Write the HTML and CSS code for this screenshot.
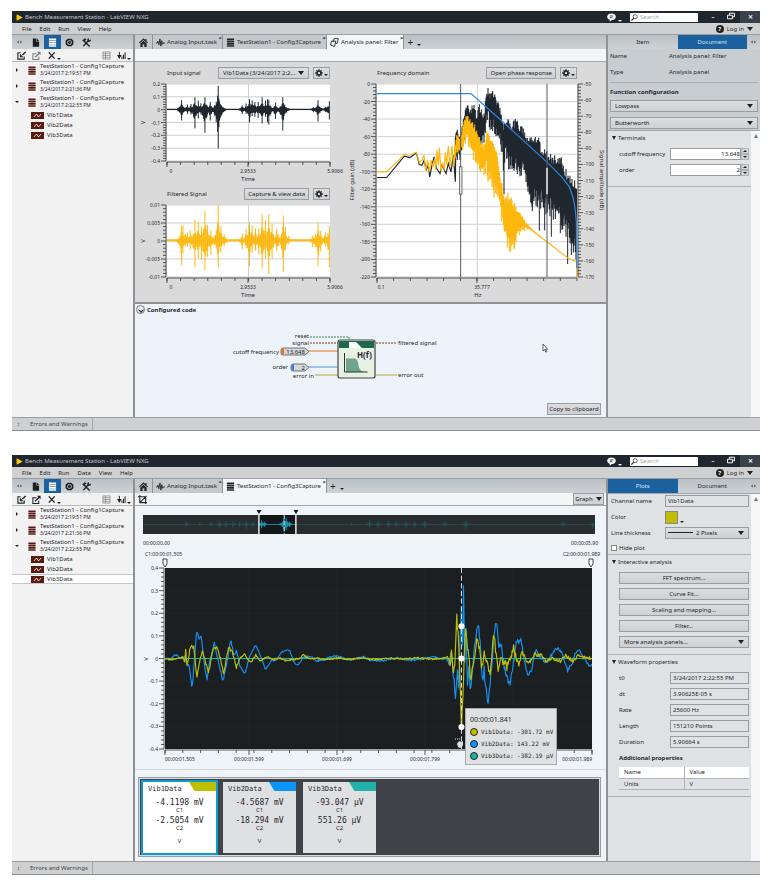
FILE: index.html
```html
<!DOCTYPE html>
<html lang="en">
<head>
    <meta charset="UTF-8">
    <meta name="viewport" content="width=device-width, initial-scale=1.0">
    <title>Bench Measurement Station - LabVIEW NXG</title>
    <link rel="stylesheet" href="styles.css">
</head>
<body>
    <svg class="symbols" aria-hidden="true">
        <symbol id="i-home" viewBox="0 0 10 10"><path d="M5 .4 0 5l.8.9L5 2.2l4.200 3.700L10 5 8.400 3.500V1H7v1.200z"/><path d="M5 3 1.500 6v4h2.600V7h1.800v3h2.600V6z"/></symbol>
        <symbol id="i-wave" viewBox="0 0 10 10"><path d="M0 5.500h1.500l.7-2 1 4L4.400 1l1 8 1-6 .9 4 .7-1.500h2" fill="none" stroke="currentColor"/></symbol>
        <symbol id="i-data" viewBox="0 0 10 10"><path d="M1 .5h8v2H1zM1 3.100h8v1.900H1zM1 5.600h8v1.900H1zM1 8.100h8v1.600H1z"/></symbol>
        <symbol id="i-doc" viewBox="0 0 10 10"><path d="M2 .5h4V4h3v5.700H2zM6.700.5 9 3.200H6.700z"/></symbol>
        <symbol id="i-target" viewBox="0 0 10 10"><path d="M3 .7h4L9.300 3v4L7 9.300H3L.7 7V3z"/><circle cx="5" cy="5" r="2.200" fill="none" stroke="#c5cbcf"/></symbol>
        <symbol id="i-tools" viewBox="0 0 10 10"><path d="M1.500 9 7.500 2.500M2 3l6.500 6.500" fill="none" stroke="currentColor" stroke-width="1.500"/><path d="M.3 2.700 3 .4l2 1-2.700 2.800zM6 .7 8 .4 7.500 2l1 .5 1.200-1V3.500L7.500 4.500 6 3z"/></symbol>
        <symbol id="i-import" viewBox="0 0 10 10"><path d="M4 2H1v7h7V6" fill="none" stroke="currentColor" stroke-width="1.200"/><path d="M9.500 1 6 4.500" stroke="currentColor" stroke-width="1.500"/><path d="M3.200 3v4h4z"/></symbol>
        <symbol id="i-export" viewBox="0 0 10 10"><path d="M5 3H1v6.500h6.500V6" fill="none" stroke="currentColor" stroke-width="1.200"/><path d="M3.500 7 8 2.500" stroke="currentColor" stroke-width="1.500"/><path d="M5.500.7h4v4z"/></symbol>
        <symbol id="i-delete" viewBox="0 0 10 10"><path d="M2 1.500 8.500 8.500M8.500 1.500 2 8.500" fill="none" stroke="currentColor" stroke-width="1.500"/></symbol>
        <symbol id="i-list" viewBox="0 0 10 10"><path d="M1 1h8v8H1zM1 3h8M1 5h8M1 7h8M4 1v8" fill="none" stroke="currentColor" stroke-width=".7"/></symbol>
        <symbol id="i-sort" viewBox="0 0 10 10"><path d="M2.600 1v7M5.500 9V6M7.200 9V4M9 9V1.500" fill="none" stroke="currentColor" stroke-width="1.100"/><path d="M0 4.500h5.200L2.600 8.500z"/></symbol>
        <symbol id="i-panel" viewBox="0 0 10 10"><path d="M3.500 4.500 4.500.7h4.800L8 6H6.500" fill="none" stroke="currentColor"/><path d="M1.500 3.500h5L5 9.300.7 8z" fill="none" stroke="currentColor"/></symbol>
        <symbol id="i-gear" viewBox="0 0 10 10"><path d="M5 .3v9.400M.3 5h9.400M1.700 1.700l6.600 6.600M8.300 1.700 1.700 8.300" stroke="currentColor" stroke-width="1.600"/><circle cx="5" cy="5" r="3.300"/><circle cx="5" cy="5" r="1.500" fill="#d8dade"/></symbol>
        <symbol id="i-crop" viewBox="0 0 10 10"><path d="M2 0v8.500h8M0 2h8.500v8M2 8.500 9.500 1" fill="none" stroke="currentColor" stroke-width="1.200"/></symbol>
        <symbol id="i-chat" viewBox="0 0 10 10"><path d="M5 .6c3 0 4.800 1.500 4.800 3.700S8 8 5 8L3 9.800V7.600C1.200 7 .2 6 .2 4.300.2 2.100 2 .6 5 .6z"/><path d="M3 3.300h4M3 5.200h3" stroke="#1f262d" stroke-width=".9"/></symbol>
        <symbol id="i-search" viewBox="0 0 10 10"><circle cx="6" cy="3.800" r="2.900" fill="none" stroke="currentColor" stroke-width="1.100"/><path d="M4 6 .7 9.300" stroke="currentColor" stroke-width="1.700"/></symbol>
        <symbol id="i-restore" viewBox="0 0 10 10"><path d="M3 3.500V1.500h6.300V6H7M.7 4h6v4.500h-6z" fill="none" stroke="currentColor" stroke-width="1.200"/></symbol>
        <symbol id="i-grip" viewBox="0 0 6 4"><path d="M0 2l2-1.700v3.400zM6 2 4 .3v3.400z"/></symbol>
        <symbol id="i-trace" viewBox="0 0 13 7"><path d="M0 0h13v7H0z" fill="#561c12"/><path d="M3 5 5.500 2 7.500 5 10 2" fill="none" stroke="#f0d8d0" stroke-width=".9"/></symbol>
        <symbol id="i-logo" viewBox="0 0 10 10"><path d="M1 .5 9.500 5 1 9.500z" fill="#ffd500"/><path d="M0 3.500h3M0 6.500h3" stroke="#d98a00"/></symbol>
    </svg>

    <main>
        <!-- Filter analysis panel -->
        <section class="window">
            <header class="titlebar">
                <svg class="icon"><use href="#i-logo"/></svg>
                <h1>Bench Measurement Station - LabVIEW NXG</h1>
                <button class="chat" aria-label="Feedback"><svg class="icon"><use href="#i-chat"/></svg><span class="dot"></span></button>
                <label class="search"><svg class="icon"><use href="#i-search"/></svg><input type="search" placeholder="Search" aria-label="Search"></label>
                <div class="controls">
                    <button aria-label="Minimize">–</button>
                    <button aria-label="Restore"><svg class="icon"><use href="#i-restore"/></svg></button>
                    <button class="close" aria-label="Close">✕</button>
                </div>
            </header>
            <nav class="menubar">
                <a href="#">File</a><a href="#">Edit</a><a href="#">Run</a><a href="#">View</a><a href="#">Help</a>
                <button class="login"><span class="help">?</span>Log in <span class="caret"></span></button>
            </nav>
            <div class="workspace">
                <aside class="project">
                    <div class="pane-tabs">
                        <span class="grip"><svg><use href="#i-grip"/></svg></span>
                        <button aria-label="Files"><svg class="icon"><use href="#i-doc"/></svg></button>
                        <button class="active" aria-label="Data"><svg class="icon"><use href="#i-data"/></svg></button>
                        <button aria-label="Hardware"><svg class="icon"><use href="#i-target"/></svg></button>
                        <button aria-label="Tools"><svg class="icon"><use href="#i-tools"/></svg></button>
                    </div>
                    <div class="pane-tools">
                        <button aria-label="Import"><svg class="icon"><use href="#i-import"/></svg></button>
                        <button class="off" aria-label="Export"><svg class="icon"><use href="#i-export"/></svg></button>
                        <button aria-label="Delete"><svg class="icon"><use href="#i-delete"/></svg><span class="dot"></span></button>
                        <button class="push off" aria-label="Columns"><svg class="icon"><use href="#i-list"/></svg></button>
                        <button aria-label="Sort"><svg class="icon"><use href="#i-sort"/></svg><span class="dot"></span></button>
                    </div>
                    <ul class="tree">
                        <li class="capture"><span class="twist"></span><svg class="icon"><use href="#i-data"/></svg><div>TestStation1 - Config1Capture<small>3/24/2017 2:19:51 PM</small></div></li>
                        <li class="capture"><span class="twist"></span><svg class="icon"><use href="#i-data"/></svg><div>TestStation1 - Config2Capture<small>3/24/2017 2:21:36 PM</small></div></li>
                        <li class="capture"><span class="twist open"></span><svg class="icon"><use href="#i-data"/></svg><div>TestStation1 - Config3Capture<small>3/24/2017 2:22:55 PM</small></div></li>
                        <li class="channel"><svg class="trace"><use href="#i-trace"/></svg>Vib1Data</li>
                        <li class="channel"><svg class="trace"><use href="#i-trace"/></svg>Vib2Data</li>
                        <li class="channel"><svg class="trace"><use href="#i-trace"/></svg>Vib3Data</li>
                    </ul>
                </aside>
                <div class="splitter"></div>
                <div class="document">
                    <div class="doc-tabs">
                        <button class="home" aria-label="Home"><svg class="icon"><use href="#i-home"/></svg></button>
                        <button><svg class="icon"><use href="#i-wave"/></svg>Analog Input.task<i>×</i></button>
                        <button><svg class="icon"><use href="#i-data"/></svg>TestStation1 - Config3Capture<i>×</i></button>
                        <button class="active"><svg class="icon"><use href="#i-panel"/></svg>Analysis panel: Filter<i>×</i></button>
                        <button class="add" aria-label="New tab">+<span class="dot"></span></button>
                    </div>
                    <div class="doc-tools"></div>
                    <div class="analysis">
                        <div class="charts">
                            <div class="chart-head">
                                <h2>Input signal</h2>
                                <span class="select signal"><select aria-label="Input signal"><option>Vib1Data (3/24/2017 2:2...</option></select></span>
                                <button class="btn gear" aria-label="Settings"><svg class="icon"><use href="#i-gear"/></svg><span class="dot"></span></button>
                            </div>
                            <svg class="chart" id="input-chart" viewBox="0 0 210 109"></svg>
                            <div class="chart-head">
                                <h2>Filtered Signal</h2>
                                <button class="btn">Capture &amp; view data</button>
                                <button class="btn gear" aria-label="Settings"><svg class="icon"><use href="#i-gear"/></svg><span class="dot"></span></button>
                            </div>
                            <svg class="chart" id="filtered-chart" viewBox="0 0 210 102"></svg>
                        </div>
                        <div class="charts frequency">
                            <div class="chart-head">
                                <h2>Frequency domain</h2>
                                <button class="btn">Open phase response</button>
                                <button class="btn gear" aria-label="Settings"><svg class="icon"><use href="#i-gear"/></svg><span class="dot"></span></button>
                            </div>
                            <svg class="chart" id="frequency-chart" viewBox="0 0 261 223"></svg>
                        </div>
                    </div>
                    <div class="code">
                        <h2><button class="collapse" aria-label="Collapse"></button>Configured code</h2>
                        <svg class="diagram" viewBox="0 0 471 84">
                            <g fill="none">
                                <path d="M175 22h39v4" stroke="#2f8a4c" stroke-dasharray="2 1"/>
                                <path d="M175 28h28M241 28h21" stroke="#7a3a20" stroke-dasharray="2 1"/>
                                <path d="M171 36h32" stroke="#e8751a"/>
                                <path d="M171 52h32" stroke="#4a90e2"/>
                                <path d="M180 60h23M241 60h21" stroke="#b3aa3a"/>
                            </g>
                            <g stroke="#555" stroke-width=".8">
                                <path d="M148 33h22l4 3.500-4 3.500h-22q-2 0-2-2v-3q0-2 2-2z" fill="#d4d6d8"/>
                                <path d="M158 49h12l4 3.500-4 3.500h-12q-2 0-2-2v-3q0-2 2-2z" fill="#d4d6d8"/>
                                <rect x="203" y="25" width="37" height="38" rx="2" fill="#e8f2e4" stroke="#444" stroke-width="1.200"/>
                            </g>
                            <path d="M148 33.500h1v6h-1q-1.500 0-1.500-2v-2q0-2 1.500-2z" fill="#e8751a"/>
                            <path d="M158 49.500h1v6h-1q-1.500 0-1.500-2v-2q0-2 1.500-2z" fill="#2f7fe8"/>
                            <path d="M204 26h35v7h-35z" fill="#1f6a4c"/>
                            <path d="M214 27h7l6 6h-13z" fill="#fff"/>
                            <path d="M211 43.500h9q3 1 3.500 7 1 5 5 6.500H211z" fill="#6fa58c"/>
                            <path d="M209.500 38v19h23" fill="none" stroke="#333"/>
                            <text x="222" y="43" class="func">H(f)</text>
                            <g text-anchor="end">
                                <text x="174" y="23">reset</text><text x="174" y="30">signal</text>
                                <text x="144" y="39">cutoff frequency</text><text x="153" y="54">order</text>
                                <text x="179" y="63">error in</text>
                                <text x="170" y="39">13.648</text><text x="170" y="55">2</text>
                            </g>
                            <text x="263" y="30">filtered signal</text><text x="263" y="62">error out</text>
                            <path d="M408 29v7l1.600-1.400 1.200 2.600 1-.5-1.200-2.500h2z" fill="#fff" stroke="#222" stroke-width=".7"/>
                        </svg>
                        <button class="btn copy">Copy to clipboard</button>
                    </div>
                </div>
                <div class="splitter"></div>
                <aside class="config">
                    <div class="side-tabs"><button>Item</button><button class="active">Document</button><span class="grip"><svg><use href="#i-grip"/></svg></span></div>
                    <div class="config-top">
                        <dl>
                            <dt>Name</dt><dd>Analysis panel: Filter</dd>
                            <dt>Type</dt><dd>Analysis panel</dd>
                        </dl>
                        <h3>Function configuration</h3>
                        <span class="select"><select aria-label="Response"><option>Lowpass</option></select></span>
                        <span class="select"><select aria-label="Design"><option>Butterworth</option></select></span>
                    </div>
                    <div class="scroller">
                        <div class="fields">
                            <section class="group">
                                <h3 class="fold">Terminals</h3>
                                <div class="field terminal"><label for="cutoff">cutoff frequency</label><input id="cutoff" value="13.648"><span class="spin"><button aria-label="Increase cutoff"></button><button aria-label="Decrease cutoff"></button></span></div>
                                <div class="field terminal"><label for="order">order</label><input id="order" value="2"><span class="spin"><button aria-label="Increase order"></button><button aria-label="Decrease order"></button></span></div>
                            </section>
                        </div>
                        <div class="scrollbar"></div>
                    </div>
                </aside>
            </div>
            <footer class="statusbar"><span class="updown">↕</span><span class="errors">Errors and Warnings</span></footer>
        </section>

        <!-- Captured waveform view -->
        <section class="window">
            <header class="titlebar">
                <svg class="icon"><use href="#i-logo"/></svg>
                <h1>Bench Measurement Station - LabVIEW NXG</h1>
                <button class="chat" aria-label="Feedback"><svg class="icon"><use href="#i-chat"/></svg><span class="dot"></span></button>
                <label class="search"><svg class="icon"><use href="#i-search"/></svg><input type="search" placeholder="Search" aria-label="Search"></label>
                <div class="controls">
                    <button aria-label="Minimize">–</button>
                    <button aria-label="Restore"><svg class="icon"><use href="#i-restore"/></svg></button>
                    <button class="close" aria-label="Close">✕</button>
                </div>
            </header>
            <nav class="menubar">
                <a href="#">File</a><a href="#">Edit</a><a href="#">Run</a><a href="#">Data</a><a href="#">View</a><a href="#">Help</a>
                <button class="login"><span class="help">?</span>Log in <span class="caret"></span></button>
            </nav>
            <div class="workspace">
                <aside class="project">
                    <div class="pane-tabs">
                        <span class="grip"><svg><use href="#i-grip"/></svg></span>
                        <button aria-label="Files"><svg class="icon"><use href="#i-doc"/></svg></button>
                        <button class="active" aria-label="Data"><svg class="icon"><use href="#i-data"/></svg></button>
                        <button aria-label="Hardware"><svg class="icon"><use href="#i-target"/></svg></button>
                        <button aria-label="Tools"><svg class="icon"><use href="#i-tools"/></svg></button>
                    </div>
                    <div class="pane-tools">
                        <button aria-label="Import"><svg class="icon"><use href="#i-import"/></svg></button>
                        <button aria-label="Export"><svg class="icon"><use href="#i-export"/></svg></button>
                        <button aria-label="Delete"><svg class="icon"><use href="#i-delete"/></svg><span class="dot"></span></button>
                        <button class="push off" aria-label="Columns"><svg class="icon"><use href="#i-list"/></svg></button>
                        <button aria-label="Sort"><svg class="icon"><use href="#i-sort"/></svg><span class="dot"></span></button>
                    </div>
                    <ul class="tree">
                        <li class="capture"><span class="twist"></span><svg class="icon"><use href="#i-data"/></svg><div>TestStation1 - Config1Capture<small>3/24/2017 2:19:51 PM</small></div></li>
                        <li class="capture"><span class="twist"></span><svg class="icon"><use href="#i-data"/></svg><div>TestStation1 - Config2Capture<small>3/24/2017 2:21:36 PM</small></div></li>
                        <li class="capture"><span class="twist open"></span><svg class="icon"><use href="#i-data"/></svg><div>TestStation1 - Config3Capture<small>3/24/2017 2:22:55 PM</small></div></li>
                        <li class="channel"><svg class="trace"><use href="#i-trace"/></svg>Vib1Data</li>
                        <li class="channel"><svg class="trace"><use href="#i-trace"/></svg>Vib2Data</li>
                        <li class="channel selected"><svg class="trace"><use href="#i-trace"/></svg>Vib3Data</li>
                    </ul>
                </aside>
                <div class="splitter"></div>
                <div class="document">
                    <div class="doc-tabs">
                        <button class="home" aria-label="Home"><svg class="icon"><use href="#i-home"/></svg></button>
                        <button><svg class="icon"><use href="#i-wave"/></svg>Analog Input.task<i>×</i></button>
                        <button class="active"><svg class="icon"><use href="#i-data"/></svg>TestStation1 - Config3Capture<i>×</i></button>
                        <button class="add" aria-label="New tab">+<span class="dot"></span></button>
                    </div>
                    <div class="doc-tools">
                        <button class="crop" aria-label="Crop"><svg class="icon"><use href="#i-crop"/></svg></button>
                        <button class="btn graph">Graph <span class="caret"></span></button>
                    </div>
                    <div class="capture-view">
                        <svg class="chart" id="overview" viewBox="0 0 471 30"></svg>
                        <div class="range"><span>00:00:00.00</span><span>00:00:05.90</span></div>
                        <div class="range cursors"><span>C1:00:00:01.505</span><span>C2:00:00:01.989</span></div>
                        <div class="graph-area">
                            <svg class="chart" id="capture-chart" viewBox="0 0 471 207"></svg>
                            <div class="tip">
                                <h4>00:00:01.841</h4>
                                <p><span class="swatch c1"></span>Vib1Data: -301.72 mV</p>
                                <p><span class="swatch c2"></span>Vib2Data: 143.22 mV</p>
                                <p><span class="swatch c3"></span>Vib3Data: -382.19 µV</p>
                            </div>
                        </div>
                        <div class="readouts">
                            <article class="card selected"><h4>Vib1Data</h4><b class="flag c1"></b><p>-4.1198 mV</p><small>C1</small><p>-2.5054 mV</p><small>C2</small><small class="unit">V</small></article>
                            <article class="card"><h4>Vib2Data</h4><b class="flag c2"></b><p>-4.5687 mV</p><small>C1</small><p>-18.294 mV</p><small>C2</small><small class="unit">V</small></article>
                            <article class="card"><h4>Vib3Data</h4><b class="flag c3"></b><p>-93.047 µV</p><small>C1</small><p>551.26 µV</p><small>C2</small><small class="unit">V</small></article>
                        </div>
                    </div>
                </div>
                <div class="splitter"></div>
                <aside class="config">
                    <div class="side-tabs"><button class="active">Plots</button><button>Document</button><span class="grip"><svg><use href="#i-grip"/></svg></span></div>
                    <div class="scroller">
                        <div class="fields">
                            <section class="group plot-group">
                                <div class="field"><label for="channel">Channel name</label><input id="channel" value="Vib1Data"></div>
                                <div class="field color"><span>Color</span><button aria-label="Plot color"></button><span class="dot"></span></div>
                                <div class="field"><label for="thickness">Line thickness</label><span class="select line"><select id="thickness"><option>2 Pixels</option></select></span></div>
                                <label class="check"><input type="checkbox"> Hide plot</label>
                            </section>
                            <section class="group">
                                <h3 class="fold">Interactive analysis</h3>
                                <div class="actions">
                                    <button class="btn">FFT spectrum...</button>
                                    <button class="btn">Curve Fit...</button>
                                    <button class="btn">Scaling and mapping...</button>
                                    <button class="btn">Filter...</button>
                                    <span class="select"><select aria-label="More analysis panels"><option>More analysis panels...</option></select></span>
                                </div>
                            </section>
                            <section class="group">
                                <h3 class="fold">Waveform properties</h3>
                                <div class="field prop"><label for="t0">t0</label><input id="t0" value="3/24/2017 2:22:55 PM"></div>
                                <div class="field prop"><label for="dt">dt</label><input id="dt" value="3.90625E-05 s"></div>
                                <div class="field prop"><label for="rate">Rate</label><input id="rate" value="25600 Hz"></div>
                                <div class="field prop"><label for="length">Length</label><input id="length" value="151210 Points"></div>
                                <div class="field prop"><label for="duration">Duration</label><input id="duration" value="5.90664 s"></div>
                                <h5>Additional properties</h5>
                                <table>
                                    <thead><tr><th>Name</th><th>Value</th></tr></thead>
                                    <tbody><tr><td>Units</td><td>V</td></tr></tbody>
                                </table>
                            </section>
                        </div>
                        <div class="scrollbar"></div>
                    </div>
                </aside>
            </div>
            <footer class="statusbar"><span class="updown">↕</span><span class="errors">Errors and Warnings</span></footer>
        </section>
    </main>
    <script src="charts.js"></script>
</body>
</html>
```
FILE: styles.css
```css
* {
    box-sizing: border-box;
}

body {
    margin: 0;
    background: #fff;
    color: #24282c;
    font-family: "Noto Sans", sans-serif;
    font-size: 6px;
    line-height: 8px;
}

h1, h2, h3, h4, h5, p, ul, dl, dd {
    margin: 0;
    padding: 0;
    font-size: 6px;
    font-weight: normal;
}

button, input, select {
    margin: 0;
    padding: 0;
    border: 0;
    border-radius: 0;
    background: none;
    color: inherit;
    font: inherit;
}

main {
    display: flex;
    flex-direction: column;
    gap: 24px;
    padding: 11px 10px 16px 12px;
}

.symbols {
    display: none;
}

.icon {
    flex: none;
    width: 9px;
    height: 9px;
    fill: currentColor;
}

.dot {
    align-self: flex-end;
    width: 0;
    margin-left: 2px;
    border: 2px solid transparent;
    border-top-color: #222;
    border-bottom: 0;
}

.caret {
    display: inline-block;
    width: 0;
    border: 3px solid transparent;
    border-top: 4px solid #222;
    border-bottom: 0;
}

.grip {
    display: flex;
    align-items: center;
    justify-content: center;
}

.grip svg {
    width: 5px;
    height: 4px;
    fill: #444;
}

/* Window frame */
.window {
    background: #cfd0d1;
    border-bottom: 1px solid #8b8e91;
}

.titlebar {
    display: flex;
    align-items: center;
    height: 12px;
    padding-left: 4px;
    background: #1f262d;
    color: #c4c8cc;
}

.titlebar > .icon {
    width: 7px;
    height: 7px;
}

.titlebar h1 {
    flex: 1;
    margin-left: 2px;
}

.chat {
    display: flex;
    margin-right: 8px;
    color: #fff;
}

.chat .dot {
    border-top-color: #fff;
}

.search {
    display: flex;
    align-items: center;
    width: 68px;
    height: 9px;
    padding-left: 1px;
    background: #fff;
    color: #333;
}

.search .icon {
    width: 7px;
    height: 7px;
}

.search input {
    width: 50px;
    margin-left: 2px;
    outline: none;
}

.search input::placeholder {
    color: #aaa;
}

.controls {
    display: flex;
    align-self: stretch;
    margin-left: 6px;
}

.controls button {
    width: 18px;
    color: #fff;
    font-weight: bold;
}

.controls .icon {
    width: 8px;
    height: 8px;
}

.controls .close {
    width: 20px;
    background: #39424a;
}

.menubar {
    display: flex;
    align-items: center;
    gap: 8px;
    height: 11px;
    padding: 0 7px 0 10px;
}

.menubar a {
    color: #222;
    text-decoration: none;
}

.login {
    display: flex;
    align-items: center;
    gap: 3px;
    margin-left: auto;
}

.help {
    width: 8px;
    height: 8px;
    border-radius: 4px;
    background: #222;
    color: #fff;
    font-weight: bold;
}

.workspace {
    display: grid;
    grid-template-columns: 121px 2px minmax(0, 1fr) 2px 152px;
    min-height: 383px;
    border-top: 1px solid #9a9ea2;
}

.splitter {
    background: #8f9397;
}

.statusbar {
    display: flex;
    align-items: center;
    height: 13px;
    border-top: 1px solid #9a9ea2;
    color: #444;
    white-space: nowrap;
}

.updown {
    width: 18px;
    padding-left: 5px;
}

.errors {
    padding-right: 4px;
    border-right: 1px solid #a5a7a9;
    line-height: 12px;
}

/* Left pane */
.project {
    background: #f2f2f2;
}

.pane-tabs {
    display: flex;
    height: 14px;
    background: linear-gradient(#b9c0c5, #cdd2d5);
}

.pane-tabs .grip {
    width: 15px;
}

.pane-tabs button {
    display: flex;
    align-items: center;
    justify-content: center;
    width: 17px;
    color: #1c1f22;
}

.pane-tabs .active {
    background: #1c619f;
    color: #fff;
}

.pane-tools {
    display: flex;
    align-items: center;
    gap: 6px;
    height: 13px;
    padding: 0 2px 0 5px;
    border-bottom: 1px solid #b8bbbd;
    color: #222;
}

.pane-tools button {
    display: flex;
}

.pane-tools .dot {
    margin-left: 1px;
}

.pane-tools .push {
    margin-left: auto;
}

.off {
    color: #77797b;
}

.tree {
    list-style: none;
}

.capture {
    display: flex;
    align-items: center;
    height: 16px;
    line-height: 7px;
    white-space: nowrap;
}

.capture .icon {
    width: 10px;
    margin-right: 3px;
    color: #561c12;
}

.capture small {
    display: block;
    font-size: 5px;
}

.twist {
    flex: none;
    width: 15px;
}

.twist::before {
    content: "";
    display: block;
    width: 0;
    margin-left: 4px;
    border: 2px solid transparent;
    border-left-color: #222;
    border-right: 0;
}

.twist.open::before {
    margin-left: 3px;
    border: 2px solid transparent;
    border-top-color: #222;
    border-bottom: 0;
}

.channel {
    display: flex;
    align-items: center;
    gap: 3px;
    height: 10px;
    padding-left: 19px;
}

.channel.selected {
    border: solid #c4c6c8;
    border-width: 1px 0;
    background: #fff;
}

.trace {
    width: 13px;
    height: 7px;
}

/* Document area */
.document {
    display: flex;
    flex-direction: column;
}

.doc-tabs {
    display: flex;
    height: 14px;
    background: linear-gradient(#b9c0c5, #cdd2d5);
}

.doc-tabs button {
    position: relative;
    display: flex;
    align-items: center;
    gap: 2px;
    padding: 0 5px 0 3px;
    border-right: 1px solid #909498;
    background: #c3c9cd;
    white-space: nowrap;
}

.doc-tabs .home {
    padding: 0 4px;
}

.doc-tabs .active {
    background: #f4f5f6;
}

.doc-tabs .add {
    border: 0;
    background: none;
    font-size: 10px;
}

.add .dot {
    margin-bottom: 3px;
}

.doc-tabs i {
    position: absolute;
    top: 0;
    right: 0;
    font-style: normal;
    font-weight: bold;
    line-height: 6px;
}

.doc-tools {
    display: flex;
    align-items: center;
    justify-content: space-between;
    height: 13px;
    padding: 0 2px 0 3px;
    border-bottom: 1px solid #a4a7aa;
    background: #f4f5f6;
}

.btn {
    display: flex;
    align-items: center;
    justify-content: center;
    height: 12px;
    border: 1px solid #9a9da1;
    background: linear-gradient(#dcdee1, #cdd0d4);
    color: #222;
}

.select {
    position: relative;
    display: block;
    height: 12px;
    border: 1px solid #9a9da1;
    background: linear-gradient(#dcdee1, #cdd0d4);
    color: #222;
}

.select::after {
    content: "";
    position: absolute;
    top: 3px;
    right: 4px;
    border: 3px solid transparent;
    border-top: 4px solid #222;
    border-bottom: 0;
    pointer-events: none;
}

.select select {
    display: block;
    width: 100%;
    height: 10px;
    padding-left: 4px;
    appearance: none;
    line-height: 10px;
}

.graph {
    width: 31px;
    gap: 3px;
}

.crop {
    display: flex;
}

.analysis {
    display: grid;
    grid-template-columns: 210fr 261fr;
    padding-top: 5px;
    background: #dadada;
}

.chart-head {
    display: flex;
    align-items: center;
    gap: 4px;
    height: 12px;
    padding: 0 15px 0 32px;
}

.frequency .chart-head {
    padding-right: 29px;
}

.chart-head h2 {
    flex: 1;
    white-space: nowrap;
}

.chart-head .btn {
    padding: 0 3px;
}

.chart-head .gear {
    width: 17px;
    padding: 0;
}

.gear .icon {
    width: 8px;
    height: 8px;
}

.gear .dot {
    margin: 0 0 2px 1px;
}

.signal {
    width: 91px;
}

.chart {
    display: block;
    width: 100%;
    fill: #24282c;
}

.chart text, .diagram text {
    font-size: 6px;
}

.chart .scale {
    font-size: 5px;
}

.code {
    display: flex;
    flex: 1;
    flex-direction: column;
    border-top: 2px solid #8f9397;
    background: #edf3f8;
}

.code h2 {
    display: flex;
    align-items: center;
    gap: 2px;
    height: 11px;
    padding-left: 1px;
    font-weight: bold;
}

.collapse {
    display: flex;
    align-items: center;
    justify-content: center;
    width: 9px;
    height: 9px;
    border: 1px solid #777;
    border-radius: 5px;
}

.collapse::before {
    content: "";
    width: 3px;
    height: 3px;
    border: solid #222;
    border-width: 0 1px 1px 0;
    transform: rotate(45deg);
}

.diagram {
    display: block;
    width: 100%;
    fill: #24282c;
}

.diagram .func {
    font-size: 8px;
    font-weight: bold;
}

.copy {
    align-self: flex-end;
    width: 54px;
    margin: auto 5px 2px 0;
    white-space: nowrap;
}

/* Captured waveform */
.capture-view {
    display: flex;
    flex: 1;
    flex-direction: column;
    background: #eff4f8;
}

.range {
    display: flex;
    justify-content: space-between;
    padding: 3px 8px 0;
    font-size: 5px;
}

.range.cursors {
    padding: 3px 6px 0 10px;
}

.graph-area {
    position: relative;
    padding-bottom: 4px;
    border-bottom: 1px solid #d4d8dc;
    margin: 0 0 7px;
}

.tip {
    position: absolute;
    right: 49px;
    bottom: 4px;
    width: 92px;
    height: 57px;
    padding: 6px 4px 2px;
    border: 1px solid #a8aaad;
    background: #dfe0e2;
}

.tip h4 {
    margin-bottom: 2px;
    font-size: 7px;
    line-height: 9px;
}

.tip p {
    display: flex;
    align-items: center;
    gap: 3px;
    height: 12px;
    font-family: "DejaVu Sans Mono", monospace;
    white-space: nowrap;
}

.swatch {
    flex: none;
    width: 8px;
    height: 8px;
    border: 1px solid #222;
    border-radius: 4px;
}

.c1 {
    background: #bfbf00;
}

.c2 {
    background: #0a94ff;
}

.c3 {
    background: #20b2aa;
}

.readouts {
    display: flex;
    gap: 7px;
    height: 80px;
    margin: 0 5px 4px 3px;
    padding: 2px 4px;
    border: 1px solid #9a9da1;
    background: #404448;
    box-shadow: inset 0 0 0 1px #d8dadc;
}

.card {
    position: relative;
    width: 73px;
    height: 71px;
    margin-top: 2px;
    padding-top: 3px;
    background: #dfe0e2;
    text-align: center;
}

.card.selected {
    background: #fff;
    outline: 2px solid #0a9ad8;
}

.card h4 {
    padding-left: 5px;
    font-family: "DejaVu Sans Mono", monospace;
    font-size: 7px;
    text-align: left;
}

.card p {
    margin-top: 5px;
    font-family: "DejaVu Sans Mono", monospace;
    font-size: 8px;
    line-height: 9px;
}

.card small {
    display: block;
    font-size: 6px;
    line-height: 6px;
}

.card small + p {
    margin-top: 3px;
}

.card .unit {
    margin-top: 7px;
}

.flag {
    position: absolute;
    top: 0;
    right: 0;
    width: 27px;
    height: 9px;
    clip-path: polygon(0 0, 100% 0, 100% 100%, 20% 100%);
}

/* Right pane */
.config {
    display: flex;
    flex-direction: column;
    background: #c8cdd1;
}

.side-tabs {
    display: flex;
    height: 14px;
    background: linear-gradient(#b9c0c5, #cdd2d5);
}

.side-tabs button {
    flex: 1;
}

.side-tabs .active {
    background: #1c619f;
    color: #d5e4f0;
}

.side-tabs .grip {
    width: 13px;
}

.config-top {
    padding: 3px 2px 1px;
}

.config dl {
    display: grid;
    grid-template-columns: 59px 1fr;
    row-gap: 8px;
    padding-bottom: 6px;
    border-bottom: 1px solid #a8adb1;
}

.config-top h3 {
    margin: 5px 0 4px;
    font-weight: bold;
}

.config-top .select + .select {
    margin-top: 5px;
}

.scroller {
    display: flex;
    flex: 1;
    border-top: 1px solid #a4a7aa;
    background: #dfe1e4;
}

.fields {
    flex: 1;
    min-width: 0;
}

.scrollbar {
    flex: none;
    width: 9px;
    padding-top: 3px;
    background: #f5f6f7;
}

.scrollbar::before {
    content: "";
    display: block;
    width: 0;
    margin: 0 auto;
    border: 2px solid transparent;
    border-bottom: 4px solid #777;
    border-top: 0;
}

.group {
    padding: 3px 2px 6px 11px;
    border-bottom: 1px solid #b0b3b6;
}

.plot-group {
    padding: 1px 2px 1px 3px;
}

.fold {
    display: flex;
    align-items: center;
    gap: 2px;
    margin: 0 0 6px -7px;
}

.fold::before {
    content: "";
    border: 2px solid transparent;
    border-top: 4px solid #222;
    border-bottom: 0;
}

.field {
    display: flex;
    align-items: center;
    height: 12px;
    margin-bottom: 4px;
}

.field > :first-child {
    flex: none;
    width: 54px;
    white-space: nowrap;
}

.field input {
    flex: 1;
    min-width: 0;
    height: 12px;
    padding-left: 2px;
    border: 1px solid #9a9da1;
}

.field .select {
    flex: 1;
}

.field.terminal > label, .field.prop > label {
    width: 51px;
}

.terminal input {
    background: #fff;
    text-align: right;
}

.spin {
    display: flex;
    flex: none;
    flex-direction: column;
    width: 8px;
    height: 12px;
}

.spin button {
    display: flex;
    flex: 1;
    align-items: center;
    justify-content: center;
    border: 1px solid #b0b3b6;
    background: #d4d6d9;
}

.spin button::before {
    content: "";
    border: 2px solid transparent;
    border-bottom-color: #222;
    border-top: 0;
}

.spin button + button::before {
    border-top: 2px solid #222;
    border-bottom: 0;
}

.color button {
    width: 13px;
    height: 13px;
    border: 1px solid #888;
    background: #bfbf00;
}

.line select {
    padding-left: 30px;
}

.line::before {
    content: "";
    position: absolute;
    top: 4px;
    left: 2px;
    width: 25px;
    height: 1px;
    background: #222;
}

.check {
    display: flex;
    align-items: center;
    gap: 2px;
    height: 10px;
}

.check input {
    width: 6px;
    height: 6px;
    border: 1px solid #888;
    background: #fff;
    appearance: none;
}

.actions {
    display: flex;
    flex-direction: column;
    gap: 4px;
}

.config h5 {
    margin-top: 6px;
    font-weight: bold;
}

.config table {
    width: 100%;
    margin-top: 5px;
    border-collapse: collapse;
}

.config th, .config td {
    width: 50%;
    height: 11px;
    padding: 0 5px;
    border-bottom: 1px solid #b0b3b6;
    font-weight: normal;
    text-align: left;
}

.config th {
    background: #fff;
}

.config th + th, .config td + td {
    border-left: 1px solid #b0b3b6;
}
```
FILE: charts.js
```js
const NS = 'http://www.w3.org/2000/svg';

function add(parent, name, attrs, text) {
    const node = document.createElementNS(NS, name);
    for (const key in attrs) node.setAttribute(key, attrs[key]);
    if (text !== undefined) node.textContent = text;
    parent.appendChild(node);
    return node;
}

// repeatable noise so the traces look the same on every load
let seed = 7;
function rand() {
    seed = (seed * 16807) % 2147483647;
    return seed / 2147483647;
}

function lerp(points, x) {
    for (let i = 1; i < points.length; i++) {
        const [x0, y0] = points[i - 1];
        const [x1, y1] = points[i];
        if (x <= x1) return y0 + (y1 - y0) * (x - x0) / (x1 - x0);
    }
    return points[points.length - 1][1];
}

function pairs(text) {
    return text.trim().split(/\s+/).map(p => p.split(',').map(Number));
}

function plotArea(svg, x, y, w, h, viewBox, fill) {
    add(svg, 'rect', { x, y, width: w, height: h, fill });
    return add(svg, 'svg', { x, y, width: w, height: h, viewBox, preserveAspectRatio: 'none' });
}

function yAxis(svg, x, top, bottom, labels, side = -1) {
    const step = (bottom - top) / (labels.length - 1);
    let d = `M${x} ${top}V${bottom}`;
    labels.forEach((label, i) => {
        const y = top + step * i;
        d += `M${x} ${y}h${side * 5}`;
        for (let k = 1; k < 5 && i < labels.length - 1; k++) d += `M${x} ${y + step * k / 5}h${side * 3}`;
        add(svg, 'text', { class: 'scale', x: x + side * 6, y: y + 2, 'text-anchor': side < 0 ? 'end' : 'start' }, label);
    });
    add(svg, 'path', { d, stroke: '#333', 'stroke-width': 0.8, fill: 'none' });
}

function xAxis(svg, y, x0, x1, count, labels) {
    let d = `M${x0} ${y}H${x1}`;
    for (let i = 0; i <= count; i++) d += `M${x0 + (x1 - x0) * i / count} ${y}v3`;
    labels.forEach(([x, label, anchor = 'middle', tick = x]) => {
        d += `M${tick} ${y}v5`;
        add(svg, 'text', { class: 'scale', x, y: y + 11, 'text-anchor': anchor }, label);
    });
    add(svg, 'path', { d, stroke: '#333', 'stroke-width': 0.8, fill: 'none' });
}

function turned(svg, x, y, angle, text) {
    add(svg, 'text', { x, y, transform: `rotate(${angle} ${x} ${y})`, 'text-anchor': 'middle' }, text);
}

// peaks are [x, height above, depth below] round the zero line
function burst(plot, x0, x1, mid, peaks, color, body, spread, base = 2) {
    let d = '';
    for (let x = x0; x < x1; x += 2) {
        let up = base, down = base;
        peaks.forEach(([px, u, l]) => {
            const dist = Math.abs(x - px);
            const k = dist < 1.1 ? 1 : body * Math.exp(-dist / spread) * (0.6 + rand() * 0.5);
            up = Math.max(up, u * k);
            down = Math.max(down, l * k);
        });
        d += `M${x} ${mid - up}V${mid + down}`;
    }
    add(plot, 'path', { d, stroke: color, 'stroke-width': 3, fill: 'none' });
}

function band(plot, upper, lower, color, jitter) {
    const start = upper[0][0];
    const end = upper[upper.length - 1][0];
    let d = '';
    for (let x = start; x <= end; x += 2) {
        const top = lerp(upper, x);
        const bottom = lerp(lower, x);
        const j = Math.min(jitter, (bottom - top) * 0.3);
        d += `M${x} ${top + rand() * j * 0.7}V${bottom - rand() * j * 1.4}`;
    }
    add(plot, 'path', { d, stroke: color, 'stroke-width': 3.2, fill: 'none' });
}

function trace(plot, points, color, noise) {
    let d = '';
    const end = points[points.length - 1][0];
    for (let x = points[0][0]; x <= end; x += 2) {
        d += `${d ? 'L' : 'M'}${x} ${(lerp(points, x) + (rand() - 0.5) * noise(x)).toFixed(1)}`;
    }
    add(plot, 'path', { d, stroke: color, 'stroke-width': 3.5, fill: 'none', 'stroke-linejoin': 'round' });
}

function timeChart(id, y0, y1, viewBox, labels, mid, peaks, color, body, spread, base) {
    const svg = document.getElementById(id);
    const plot = plotArea(svg, 32, y0, 163, y1 - y0, viewBox, '#fff');
    const [, vy, , vh] = viewBox.split(' ').map(Number);
    let grid = `M355 ${vy}v${vh}`;
    for (let i = 0; i < labels.length; i++) grid += `M110 ${vy + vh * i / (labels.length - 1)}h490`;
    add(plot, 'path', { d: grid, stroke: '#d0d0d0', 'stroke-width': 3 });
    burst(plot, 110, 600, mid, peaks, color, body, spread, base);
    yAxis(svg, 31, y0, y1, labels);
    xAxis(svg, y1 + 1, 32, 195, 12, [[36, '0', 'middle', 32], [113, '2.9533'], [200, '5.9066', 'middle', 195]]);
    add(svg, 'text', { x: 113, y: y1 + 20, 'text-anchor': 'middle' }, 'Time');
    turned(svg, 10, (y0 + y1) / 2, -90, 'V');
}

timeChart('input-chart', 5, 82, '110 167 490 228', ['0.2', '0.1', '0', '-0.1', '-0.2', '-0.3', '-0.4'], 242,
    [[154, 27, 33], [172, 14, 14], [182, 16, 15], [194, 36, 57], [204, 26, 27], [212, 18, 15], [224, 36, 69],
     [240, 22, 33], [264, 70, 116], [268, 24, 24], [280, 5, 8], [336, 12, 14], [348, 17, 14], [358, 30, 39],
     [366, 26, 20], [374, 22, 22], [384, 22, 26], [396, 36, 42], [406, 26, 22], [412, 30, 38], [416, 28, 45],
     [436, 20, 28], [458, 36, 63], [464, 14, 14], [476, 4, 4], [550, 7, 9], [564, 27, 36], [570, 8, 10],
     [586, 8, 9], [598, 24, 30]], '#1f262d', 0.72, 7, 2);

timeChart('filtered-chart', 5, 77, '110 80 490 216', ['0.01', '0.005', '0', '-0.005', '-0.01'], 186,
    [[154, 44, 75], [158, 44, 40], [166, 20, 18], [172, 24, 20], [180, 30, 27], [194, 62, 80], [204, 56, 54],
     [214, 42, 60], [224, 88, 90], [232, 46, 50], [242, 30, 44], [252, 12, 16], [264, 106, 82], [272, 42, 36],
     [282, 18, 18], [290, 5, 8], [336, 20, 27], [348, 34, 24], [358, 54, 78], [366, 46, 38], [376, 36, 30],
     [386, 36, 42], [396, 78, 84], [406, 60, 54], [416, 78, 100], [426, 50, 56], [440, 34, 32], [446, 16, 18],
     [460, 75, 94], [466, 40, 28], [476, 14, 12], [548, 15, 20], [556, 18, 20], [564, 54, 78], [572, 28, 34],
     [586, 24, 18], [594, 22, 18], [598, 42, 80]], '#fdb70d', 0.72, 6, 3);

function frequencyChart() {
    const svg = document.getElementById('frequency-chart');
    const plot = plotArea(svg, 32, 5, 200, 193, '111 76 600 580', '#fff');
    let grid = 'M412 76v580';
    for (let y = 76; y < 656; y += 52.7) grid += `M111 ${y}h600`;
    add(plot, 'path', { d: grid, stroke: '#d0d0d0', 'stroke-width': 3 });

    const ink = '#1f262d';
    const line = (points, stroke) => add(plot, 'polyline', { points, stroke, 'stroke-width': 3.5, fill: 'none' });

    line('110,357 140,357 193,293 210,297 229,283 238,318 246,320 252,306 259,333 265,320 269,355 275,325 282,295 290,330 300,345 306,320 318,345 325,315 333,340 340,290 346,370 348,230', ink);
    band(plot,
        pairs('346,225 352,210 360,240 370,180 382,130 388,160 402,126 410,175 416,130 425,155 433,165 437,110 444,80 450,96 458,96 466,110 476,120 484,165 492,192 506,168 515,185 525,180 545,195 560,232 580,238 590,222 605,258 625,280 645,290 665,296 680,335 700,358 711,376'),
        pairs('346,300 360,320 370,260 380,220 400,245 420,260 433,260 440,200 460,230 480,260 488,300 492,420 496,300 510,350 530,360 550,360 563,410 575,450 600,455 620,470 640,490 665,515 680,540 700,585 711,610'),
        ink, 46);
    add(plot, 'path', { d: 'M577 400V458M598 400V517M614 400V516M634 400V535M661 450V524M683 500V617M694 500V590', stroke: ink, 'stroke-width': 3 });

    const gold = '#fdb70d';
    line('110,340 140,340 193,288 210,290 229,281 238,312 246,305 252,290 257,336 263,305 268,340', gold);
    line('268,340 273,305 279,325 284,300 287,335 291,275 295,320 298,268 303,338 308,312 313,335 316,282 320,318 325,262 330,325 336,262 341,322 346,260', gold);
    band(plot,
        pairs('344,255 352,220 362,238 372,182 382,162 390,180 402,188 410,215 420,236 432,255 440,213 450,230 462,250 470,276 480,336 495,418 505,400 520,426 540,462 565,500 600,533'),
        pairs('344,320 352,290 370,280 382,270 400,310 420,355 440,360 460,415 475,445 490,520 503,590 515,592 530,560 545,525 565,512 600,537'),
        gold, 40);
    line('595,530 640,565 665,585 685,600 700,607 710,608 710,656', gold);
    line('110,105 393,105 500,200 620,310 665,355 688,385 700,420 706,455 709,490 710,630', '#2f86e6');
    add(plot, 'path', { d: 'M362 76v580M621 76v580', stroke: '#55595d', 'stroke-width': 3 });
    add(plot, 'path', { d: 'M621 328v79', stroke: '#ddd', 'stroke-width': 5 });
    add(plot, 'rect', { x: 358, y: 325, width: 8, height: 82, fill: '#e8e8e8', stroke: '#333', 'stroke-width': 2 });

    const gain = [], amp = [];
    for (let v = 0; v >= -220; v -= 20) gain.push(v);
    for (let v = -50; v >= -170; v -= 10) amp.push(v);
    yAxis(svg, 31, 5, 198, gain);
    yAxis(svg, 233, 5, 198, amp, 1);
    xAxis(svg, 199, 32, 232, 12, [[36, '0.1', 'middle', 32], [137, '35.777', 'middle', 132]]);
    add(svg, 'text', { x: 133, y: 218, 'text-anchor': 'middle' }, 'Hz');
    turned(svg, 9, 101, -90, 'Filter gain (dB)');
    turned(svg, 255, 101, 90, 'Signal amplitude (dB)');
}

function overview() {
    const svg = document.getElementById('overview');
    const plot = plotArea(svg, 8, 9, 452, 19, '40 138 1357 57', '#2a2d30');
    add(plot, 'rect', { x: 388, y: 138, width: 111, height: 57, fill: '#14181b' });
    const quiet = [[170, 8, 8], [210, 5, 5], [245, 5, 5], [270, 10, 12], [290, 9, 9], [310, 10, 10], [330, 8, 8],
        [350, 12, 14], [370, 6, 8], [666, 4, 4], [720, 12, 9], [746, 8, 9], [776, 9, 8], [800, 8, 8], [830, 10, 10],
        [856, 8, 10], [886, 10, 10], [946, 9, 8], [1010, 10, 14], [1300, 8, 8], [1390, 6, 12]];
    burst(plot, 40, 1397, 166, quiet, '#23545a', 0.7, 6, 1);
    burst(plot, 390, 498, 166, [[396, 12, 12], [404, 8, 8], [464, 24, 24], [470, 20, 18], [480, 8, 8]], '#1f9bb0', 0.8, 6, 1);
    add(plot, 'path', { d: 'M388 138v57M499 138v57', stroke: '#fff', 'stroke-width': 4 });
    add(plot, 'path', { d: 'M464 138v57', stroke: '#ccc', 'stroke-width': 3, 'stroke-dasharray': '12 6' });
    add(svg, 'path', { d: 'M121.500 4h5l-2.500 4zM158.500 4h5l-2.500 4z', fill: '#111' });
}

function captureChart() {
    const svg = document.getElementById('capture-chart');
    const plot = plotArea(svg, 30, 10, 427, 181, '106 27 1279 544', '#1b1f22');
    let grid = 'M357 27v544M621 27v544M885 27v544M1150 27v544';
    for (let y = 95; y < 571; y += 68) grid += `M106 ${y}h1279`;
    add(plot, 'path', { d: grid, stroke: '#202528', 'stroke-width': 3 });

    // the two hits ring, the stretch between them is nearly quiet
    const noise = x => (x > 950 && x < 1180) ? 24 : (x > 160 && x < 330) || x > 1180 ? 10 : 5;

    trace(plot, pairs(`106,300 125,300 137,287 150,296 165,292 172,318 178,320 187,392 195,300 201,212 208,238
        215,235 223,310 232,366 240,310 254,252 262,290 279,368 290,320 303,243 312,290 320,278 330,320 345,347
        360,290 377,259 390,285 407,332 425,305 440,303 455,280 470,275 480,277 492,310 505,320 520,295 540,292
        560,306 580,304 600,294 620,292 640,297 660,303 680,300 700,294 720,304 760,306 800,297 830,303 850,304
        880,300 910,294 945,300 953,297 958,312 963,275 968,330 976,410 982,330 986,380 990,230 994,150 997,330
        1000,80 1004,300 1008,210 1012,380 1016,330 1021,402 1027,340 1034,250 1044,198 1050,250 1057,370
        1062,330 1066,385 1074,437 1080,370 1086,310 1092,230 1098,186 1105,260 1112,252 1120,310 1127,355
        1140,370 1150,310 1158,252 1173,245 1180,300 1194,352 1205,330 1217,270 1225,290 1237,300 1247,313
        1258,300 1270,275 1283,266 1296,285 1312,335 1325,315 1335,285 1348,273 1360,295 1375,322 1385,318`), '#1590ee', noise);
    add(plot, 'path', { d: 'M106 299h1279', stroke: '#20b2aa', 'stroke-width': 3 });
    trace(plot, pairs(`106,300 130,303 150,297 160,295 165,310 168,275 172,320 177,300 182,262 192,265 201,358
        208,320 218,272 230,320 237,342 245,295 253,262 265,270 282,344 290,300 297,265 308,280 320,325 330,300
        345,283 355,305 365,308 378,288 390,308 410,293 430,302 450,297 465,305 490,302 508,300 520,288 540,300
        560,297 580,303 620,298 660,301 700,297 740,302 780,298 820,301 860,297 900,301 945,298 955,290 961,322
        965,270 969,345 974,330 980,177 985,240 989,350 994,505 999,400 1003,260 1007,200 1012,280 1017,290
        1021,368 1028,320 1034,300 1041,238 1047,262 1055,330 1062,280 1070,305 1079,350 1085,290 1091,223
        1097,280 1105,335 1112,290 1118,320 1125,310 1130,325 1138,300 1150,270 1158,300 1166,328 1175,285
        1183,290 1190,310 1200,308 1212,285 1222,290 1235,288 1248,310 1260,300 1275,300 1290,307 1305,290
        1330,308 1345,288 1360,296 1385,298`), '#bfbf00', noise);

    add(plot, 'path', { d: 'M994 27v544', stroke: '#ddd', 'stroke-width': 3, 'stroke-dasharray': '15 8' });
    [202, 299, 505].forEach(cy => add(plot, 'circle', { cx: 994, cy, r: 9, fill: '#fff' }));
    add(svg, 'path', { d: 'M323 184l2-1 1 1 2-1v4q-1 3-3 3t-3-4z', fill: '#ddd' });
    add(svg, 'path', { d: 'M320 181h5', stroke: '#ddd', 'stroke-dasharray': '1 1' });

    const handle = x => `M${x - 2} 1h4v5l-2 3-2-3z`;
    add(svg, 'path', { d: handle(30) + handle(456), fill: '#fff', stroke: '#333', 'stroke-width': 0.9 });
    yAxis(svg, 29, 10, 191, ['0.4', '0.3', '0.2', '0.1', '0', '-0.1', '-0.2', '-0.3', '-0.4']);
    xAxis(svg, 192, 30, 457, 24, [[30, '00:00:01.505', 'start'], [114, '00:00:01.599'], [202, '00:00:01.699'],
        [290, '00:00:01.799'], [457, '00:00:01.989', 'end']]);
    turned(svg, 13, 101, -90, 'V');
}

frequencyChart();
overview();
captureChart();
```
